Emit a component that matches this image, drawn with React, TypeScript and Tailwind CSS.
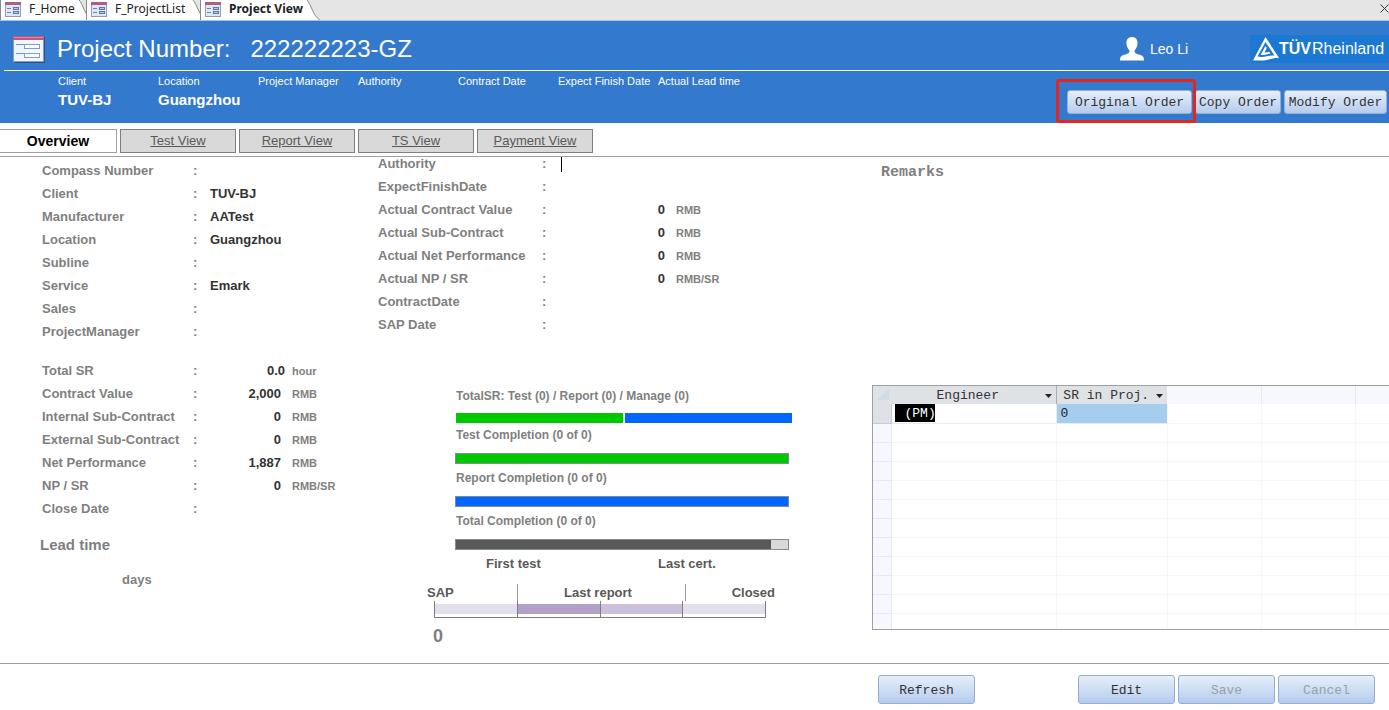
import type { ReactNode } from "react";

const docTabs = [
  { label: "F_Home", width: "w-[93px]", active: false },
  { label: "F_ProjectList", width: "w-[121px]", active: false },
  { label: "Project View", width: "w-[121px]", active: true },
];

const summary = [
  { label: "Client", value: "TUV-BJ" },
  { label: "Location", value: "Guangzhou" },
  { label: "Project Manager", value: "" },
  { label: "Authority", value: "" },
  { label: "Contract Date", value: "" },
  { label: "Expect Finish Date", value: "" },
  { label: "Actual Lead time", value: "" },
];

const views = ["Test View", "Report View", "TS View", "Payment View"];

const projectFields = [
  { label: "Compass Number", value: "" },
  { label: "Client", value: "TUV-BJ" },
  { label: "Manufacturer", value: "AATest" },
  { label: "Location", value: "Guangzhou" },
  { label: "Subline", value: "" },
  { label: "Service", value: "Emark" },
  { label: "Sales", value: "" },
  { label: "ProjectManager", value: "" },
];

const costFields = [
  { label: "Total SR", amount: "0.0", unit: "hour" },
  { label: "Contract Value", amount: "2,000", unit: "RMB" },
  { label: "Internal Sub-Contract", amount: "0", unit: "RMB" },
  { label: "External Sub-Contract", amount: "0", unit: "RMB" },
  { label: "Net Performance", amount: "1,887", unit: "RMB" },
  { label: "NP / SR", amount: "0", unit: "RMB/SR" },
  { label: "Close Date", amount: "", unit: "" },
];

const actualFields = [
  { label: "ExpectFinishDate", amount: "", unit: "" },
  { label: "Actual Contract Value", amount: "0", unit: "RMB" },
  { label: "Actual Sub-Contract", amount: "0", unit: "RMB" },
  { label: "Actual Net Performance", amount: "0", unit: "RMB" },
  { label: "Actual NP / SR", amount: "0", unit: "RMB/SR" },
  { label: "ContractDate", amount: "", unit: "" },
  { label: "SAP Date", amount: "", unit: "" },
];

const emptyRows = [1, 2, 3, 4, 5, 6, 7, 8, 9, 10];

function FormIcon() {
  return (
    <svg viewBox="0 0 16 16" className="h-4 w-4 shrink-0" aria-hidden="true">
      <rect x="0" y="1" width="16" height="15" fill="#8f9dbd" />
      <rect x="1" y="4" width="14" height="11" fill="#dfe7f5" />
      <rect x="0" y="1" width="16" height="3" fill="#b0607c" />
      <path d="M2 7.500h4M2 11.500h4" stroke="#6f86b5" />
      <rect x="8.500" y="6.500" width="5" height="2" fill="#b9c8e2" stroke="#5f79ab" />
      <rect x="8.500" y="10.500" width="5" height="2" fill="#b9c8e2" stroke="#5f79ab" />
    </svg>
  );
}

function FormIconLarge() {
  return (
    <svg viewBox="0 0 32 28" className="h-7 w-8 shrink-0" aria-hidden="true">
      <rect x="2" y="2" width="30" height="26" fill="#23528f" />
      <rect x="0" y="1" width="31" height="26" fill="#8a9cbb" />
      <rect x="1" y="5" width="29" height="21" fill="#f1f5fc" />
      <rect x="0" y="1" width="31" height="4" fill="#c0587a" />
      <path d="M1 2.500h29" stroke="#d98aa3" />
      <path d="M3 9.500h8M3 18.500h8" stroke="#6f93c4" />
      <rect x="11.500" y="9.500" width="15" height="4" fill="#fff" stroke="#7f9fcb" />
      <rect x="11.500" y="18.500" width="15" height="4" fill="#fff" stroke="#7f9fcb" />
    </svg>
  );
}

function Logo() {
  return (
    <div className="flex h-7 w-[139px] items-center overflow-hidden bg-[#1b78d3] pl-[3px] text-white">
      <svg viewBox="0 0 26 24" className="h-6 w-[26px] shrink-0" aria-hidden="true">
        <path
          fillRule="evenodd"
          d="M12.500 0L26 21C20 20.500 15 23.500 8 23.500H0L12.500 0ZM12.500 5L4.500 19.500C11 21 15 18.500 21.500 18.500L12.500 5Z"
          fill="#fff"
        />
        <path d="M12.500 9L7.500 18C11 18.500 14 17 17.500 16.500L16.500 15C14.500 15 13 15.500 11.500 15.500L13.800 11Z" fill="#fff" />
      </svg>
      <span className="text-[16px] leading-5 font-bold">TÜV</span>
      <span className="ml-px text-[16px] leading-5">Rheinland</span>
    </div>
  );
}

function FieldRow({ label, labelWidth, children }: { label: string; labelWidth: string; children?: ReactNode }) {
  return (
    <div className="flex h-3.5 items-baseline text-[13px] leading-[14px] font-bold">
      <dt className="flex shrink-0 text-[#7f7f7f]">
        <span className={`whitespace-nowrap ${labelWidth}`}>{label}</span>
        <span className="w-[17px]">:</span>
      </dt>
      <dd className="flex items-baseline text-[#333]">{children}</dd>
    </div>
  );
}

function Amount({ amount, unit, width }: { amount: string; unit: string; width: string }) {
  return (
    <>
      <span className={`text-right ${width} ${unit === "hour" ? "" : "pr-1"}`}>{amount}</span>
      <span className="ml-[7px] text-[11px] text-[#7f7f7f]">{unit}</span>
    </>
  );
}

function FormButton({ children, className, disabled }: { children: ReactNode; className: string; disabled?: boolean }) {
  return (
    <button
      type="button"
      disabled={disabled}
      className={`rounded-[3px] border border-[#93aed0] bg-linear-to-b from-[#e6effa] to-[#b5cbee] pt-0.5 font-['Liberation_Mono',monospace] text-[13px] leading-4 whitespace-nowrap text-[#333] disabled:text-[#9a9fa8] ${className}`}
    >
      {children}
    </button>
  );
}

function Meter({ label, fill, percent }: { label: string; fill: string; percent: number }) {
  return (
    <div className="text-[12px] leading-[14px] font-bold text-[#7f7f7f]">
      <p>{label}</p>
      <div className="mt-[11px] -ml-px h-[11px] w-[334px] border border-[#7f8f8f] bg-[#d9d9d9]">
        <div className={`h-full ${fill}`} style={{ width: `${percent}%` }} />
      </div>
    </div>
  );
}

function ColumnHead({ children }: { children: ReactNode }) {
  return (
    <div className="flex items-center pt-px leading-[17px]">
      <span className="flex-1 text-center">{children}</span>
      <svg viewBox="0 0 7 4" className="mr-1 h-1 w-[7px]" aria-hidden="true">
        <path d="M0 0h7L3.500 4z" fill="#222" />
      </svg>
    </div>
  );
}

function DocumentTabs() {
  return (
    <nav className="flex h-[21px] items-stretch border-b border-[#a9c4e4] bg-[#e5e5e5] font-['Noto_Sans',sans-serif] text-[12px] text-[#222]">
      {docTabs.map((t) => (
        <button
          key={t.label}
          type="button"
          className={`relative -mr-[7px] flex items-center pb-0.5 pl-[5px] ${t.width} ${t.active ? "font-bold" : ""}`}
        >
          <svg viewBox="0 0 100 20" preserveAspectRatio="none" className="absolute inset-y-0 left-0 h-full w-[calc(100%-20px)]" aria-hidden="true">
            <rect width="101" height="20" fill="#fff" />
            <path d="M0 0V20" stroke="#8a8a8a" strokeWidth="2" vectorEffect="non-scaling-stroke" />
          </svg>
          <svg viewBox="0 0 20 20" className="absolute right-0 bottom-0 h-5 w-5" aria-hidden="true">
            <path d="M0 0H6C10 4 12 16 19 20H0Z" fill="#fff" />
            <path d="M6 0C10 4 12 16 19 20" fill="none" stroke="#8a8a8a" />
          </svg>
          <span className="relative flex items-center gap-2 whitespace-nowrap">
            <FormIcon />
            {t.label}
          </span>
        </button>
      ))}
      <button type="button" aria-label="Close" className="ml-auto w-[9px] overflow-hidden pb-1">
        <svg viewBox="0 0 9 9" className="h-[9px] w-[9px]" aria-hidden="true">
          <path d="M0.500 0.500L8.500 8.500M8.500 0.500L0.500 8.500" stroke="#333" />
        </svg>
      </button>
    </nav>
  );
}

function Header() {
  return (
    <header className="bg-[#3379cd] text-white">
      <div className="ml-1 flex h-[50px] items-center border-b border-white pt-1.5 pl-[9px]">
        <FormIconLarge />
        <h1 className="ml-3 text-[24px] leading-7">Project Number:</h1>
        <span className="ml-5 text-[24px] leading-7">222222223-GZ</span>
        <div className="ml-auto flex items-center">
          <svg viewBox="0 0 24 24" className="h-6 w-6" aria-hidden="true">
            <path
              d="M12 0C8 0 6 3 6.500 7C6.800 10 8 12 9.500 13.500C9.500 16 8.500 16.500 5 17.500C1.500 18.500 0 19.500 0 23.500H24C24 19.500 22.500 18.500 19 17.500C15.500 16.500 14.500 16 14.500 13.500C16 12 17.200 10 17.500 7C18 3 16 0 12 0Z"
              fill="#fff"
            />
          </svg>
          <span className="ml-1.5 w-[100px] text-[14px] leading-5">Leo Li</span>
          <Logo />
        </div>
      </div>
      <div className="flex h-[52px] justify-between pl-[57px]">
        <dl className="flex pl-px">
          {summary.map((s) => (
            <div key={s.label} className="w-[100px] pt-[3px]">
              <dt className="text-[11px] leading-[14px] whitespace-nowrap">{s.label}</dt>
              <dd className="mt-[3px] text-[15px] leading-[18px] font-bold">{s.value}</dd>
            </div>
          ))}
        </dl>
        <div className="flex items-start gap-[3px] pt-[19px] pr-0.5">
          <div className="relative flex">
            <FormButton className="h-6 w-[125px]">Original Order</FormButton>
            {/* highlight frame */}
            <div className="pointer-events-none absolute -top-[11px] -left-[11px] z-10 h-11 w-[140px] rounded-[3px] border-[3px] border-[#e5261f]" />
          </div>
          <FormButton className="h-6 w-[86px]">Copy Order</FormButton>
          <FormButton className="h-6 w-[103px]">Modify Order</FormButton>
        </div>
      </div>
    </header>
  );
}

function ViewTabs() {
  return (
    <nav className="flex h-[34px] items-start gap-[3px] border-b border-[#a0a0a0] pt-1.5 text-[13px]">
      <button type="button" className="h-6 w-[117px] border border-l-0 border-[#a0a0a0] text-[14px] font-bold text-black">
        Overview
      </button>
      {views.map((v) => (
        <button key={v} type="button" className="h-6 w-[116px] border border-[#7f7f7f] bg-[#d9d9d9] text-[#595959] underline">
          {v}
        </button>
      ))}
    </nav>
  );
}

function Timeline() {
  return (
    <div className="ml-[49px] w-[348px] text-[13px] leading-[14px] font-bold text-[#595959]">
      <div className="flex">
        <span className="w-[172px] pl-[59px]">First test</span>
        <span className="pl-[59px]">Last cert.</span>
      </div>
      <div className="mt-[13px] flex h-[17px] items-center">
        <span className="w-[90px]">SAP</span>
        <span className="h-full w-px bg-[#a0a0a0]" />
        <span className="w-[167px] pl-[46px]">Last report</span>
        <span className="h-full w-px bg-[#a0a0a0]" />
        <span className="flex-1 text-right">Closed</span>
      </div>
      <div className="ml-[7px] flex h-[17px] w-[332px] border-x border-b border-[#7f7f7f]">
        <div className="mt-[3px] h-2.5 flex-1 bg-[#e4dfec]" />
        <div className="w-px bg-[#7f7f7f]" />
        <div className="mt-[3px] h-2.5 flex-1 bg-[#b1a0c7]" />
        <div className="w-px bg-[#7f7f7f]" />
        <div className="mt-[3px] h-2.5 flex-1 bg-[#ccc0da]" />
        <div className="w-px bg-[#7f7f7f]" />
        <div className="mt-[3px] h-2.5 flex-1 bg-[#e4dfec]" />
      </div>
      <p className="mt-2 ml-1.5 text-[18px] leading-5 text-[#7f7f7f]">0</p>
    </div>
  );
}

function EngineerTable() {
  return (
    <div className="h-[245px] overflow-hidden border-y border-l border-[#a0a0a0]">
      <table className="w-full table-fixed border-collapse font-['Liberation_Mono',monospace] text-[13px] leading-[18px] text-[#222]">
        <colgroup>
          <col className="w-[18px]" />
          <col className="w-[165px]" />
          <col className="w-[111px]" />
          <col className="w-[94px]" />
          <col className="w-[94px]" />
          <col />
        </colgroup>
        <thead>
          <tr className="h-[18px] bg-[#dee1e5] text-[#333]">
            <th className="p-0" aria-label="Select all">
              <svg viewBox="0 0 12 12" className="ml-1 h-3 w-3" aria-hidden="true">
                <path d="M12 0V11H0Z" fill="#cfdbe6" />
              </svg>
            </th>
            <th className="border-r border-[#a9adb3] p-0 font-normal">
              <ColumnHead>Engineer</ColumnHead>
            </th>
            <th className="p-0 font-normal">
              <ColumnHead>SR in Proj.</ColumnHead>
            </th>
            <td className="border-r border-[#e8e8ee] bg-[#f7f7ff]" />
            <td className="border-r border-[#e8e8ee] bg-[#f7f7ff]" />
            <td className="bg-[#f7f7ff]" />
          </tr>
        </thead>
        <tbody>
          <tr className="h-[19px]">
            <td className="border-r border-b border-[#c8ccd2] bg-[#dee1e5] p-0" />
            <td className="border-r border-b border-[#ecece4] p-0 pl-[3px]">
              <span className="block w-10 bg-black pt-0.5 pl-2.5 leading-4 text-white">(PM)</span>
            </td>
            <td className="border-b border-[#ecece4] bg-[#a5cdee] p-0 pt-0.5 pl-1 leading-4">0</td>
            <td className="border border-t-0 border-[#f7f7f5]" />
            <td className="border border-t-0 border-[#f7f7f5]" />
            <td className="border-b border-[#f7f7f5]" />
          </tr>
          {emptyRows.map((r) => (
            <tr key={r} className="h-[19px]">
              <td className="border-r border-b border-[#e8e8ee] bg-[#f7f7ff]" />
              <td className="border-r border-b border-[#f7f7f5]" />
              <td className="border-r border-b border-[#f7f7f5]" />
              <td className="border-r border-b border-[#f7f7f5]" />
              <td className="border-r border-b border-[#f7f7f5]" />
              <td className="border-b border-[#f7f7f5]" />
            </tr>
          ))}
          <tr className="h-[19px]">
            <td className="border-r border-[#e8e8ee] bg-[#f7f7ff]" />
            <td className="border-r border-[#f7f7f5]" />
            <td className="border-r border-[#f7f7f5]" />
            <td className="border-r border-[#f7f7f5]" />
            <td className="border-r border-[#f7f7f5]" />
            <td />
          </tr>
        </tbody>
      </table>
    </div>
  );
}

export default function App() {
  return (
    <div className="overflow-x-hidden bg-white font-['Liberation_Sans',Arial,sans-serif]">
      <DocumentTabs />
      <Header />
      <ViewTabs />

      <main className="flex border-b border-[#a0a0a0] pb-[17px]">
        {/* Project data */}
        <section className="w-[378px] shrink-0 pt-[7px] pl-10">
          <dl className="flex flex-col gap-[9px] pl-0.5">
            {projectFields.map((f) => (
              <FieldRow key={f.label} label={f.label} labelWidth="w-[151px]">
                {f.value}
              </FieldRow>
            ))}
          </dl>
          <dl className="mt-[25px] flex flex-col gap-[9px] pl-0.5">
            {costFields.map((f) => (
              <FieldRow key={f.label} label={f.label} labelWidth="w-[151px]">
                <Amount amount={f.amount} unit={f.unit} width="w-[75px]" />
              </FieldRow>
            ))}
          </dl>
          <h2 className="mt-5 text-[15px] leading-[18px] font-bold text-[#7f7f7f]">Lead time</h2>
          <p className="mt-[19px] pl-[82px] text-[13px] leading-[14px] font-bold text-[#7f7f7f]">days</p>
        </section>

        {/* Actuals and progress */}
        <section className="w-[494px] shrink-0">
          <dl className="flex flex-col gap-[9px]">
            <div className="flex h-3.5 text-[13px] leading-[14px] font-bold text-[#7f7f7f]">
              <dt className="flex">
                <label htmlFor="authority" className="w-[164px]">Authority</label>
                <span className="w-[19px]">:</span>
              </dt>
              <dd className="flex">
                <span className="h-[15px] w-px bg-black" />
                <input id="authority" type="text" className="h-3.5 w-[200px] outline-none" />
              </dd>
            </div>
            {actualFields.map((f) => (
              <FieldRow key={f.label} label={f.label} labelWidth="w-[164px]">
                <Amount amount={f.amount} unit={f.unit} width="w-[110px]" />
              </FieldRow>
            ))}
          </dl>

          <div className="mt-[57px] flex flex-col pl-[78px]">
            <p className="text-[12px] leading-[14px] font-bold text-[#7f7f7f]">TotalSR: Test (0) / Report (0) / Manage (0)</p>
            <div className="mt-2.5 mb-[5px] flex h-2.5 w-[336px] gap-0.5">
              <div className="flex-1 bg-[#00c800]" />
              <div className="flex-1 bg-[#0066ff]" />
            </div>
            <div className="flex flex-col gap-[7px]">
              <Meter label="Test Completion (0 of 0)" fill="bg-[#00c800]" percent={100} />
              <Meter label="Report Completion (0 of 0)" fill="bg-[#0066ff]" percent={100} />
              <Meter label="Total Completion (0 of 0)" fill="bg-[#595959]" percent={95} />
            </div>
          </div>
          <div className="mt-[7px]">
            <Timeline />
          </div>
        </section>

        {/* Remarks and engineers */}
        <section className="min-w-0 flex-1">
          <h2 className="mt-2 ml-[9px] font-['Liberation_Mono',monospace] text-[15px] leading-4 font-bold text-[#7f7f7f]">Remarks</h2>
          <div className="mt-[204px]">
            <EngineerTable />
          </div>
        </section>
      </main>

      <footer className="flex justify-end gap-[3px] pt-[11px] pr-3.5 pb-1.5">
        <FormButton className="mr-[100px] h-[29px] w-[97px]">Refresh</FormButton>
        <FormButton className="h-[29px] w-[97px]">Edit</FormButton>
        <FormButton className="h-[29px] w-[97px]" disabled>
          Save
        </FormButton>
        <FormButton className="h-[29px] w-[97px]" disabled>
          Cancel
        </FormButton>
      </footer>
    </div>
  );
}
